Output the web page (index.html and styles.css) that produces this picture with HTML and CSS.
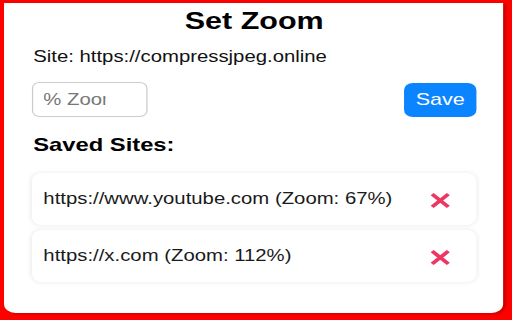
FILE: index.html
```html
<!DOCTYPE html>
<html lang="en">
<head>
<meta charset="utf-8">
<title>Set Zoom</title>
<link rel="stylesheet" href="styles.css">
</head>
<body>
  <div class="panel">
    <h2 class="title">Set Zoom</h2>
    <p class="site">Site: https://compressjpeg.online</p>
    <div class="controls">
      <input class="zoom-input" type="text" placeholder="% Zoom">
      <button class="save-btn">Save</button>
    </div>
    <h3 class="saved-title">Saved Sites:</h3>
    <ul class="site-list">
      <li class="site-row">
        <span class="site-text">https://www.youtube.com (Zoom: 67%)</span>
        <svg class="remove" viewBox="0 0 16 16" aria-label="remove"><path d="M2 2L14 14M14 2L2 14"/></svg>
      </li>
      <li class="site-row">
        <span class="site-text">https://x.com (Zoom: 112%)</span>
        <svg class="remove" viewBox="0 0 16 16" aria-label="remove"><path d="M2 2L14 14M14 2L2 14"/></svg>
      </li>
    </ul>
  </div>
</body>
</html>
```
FILE: styles.css
```css
html, body {
  margin: 0;
  height: 100%;
}
body {
  background: #ff0000;
  padding: 3px 0 0 4px;
  box-sizing: border-box;
  overflow: hidden;
  font-family: "Liberation Sans", Arial, sans-serif;
  color: #111;
}
.panel {
  width: 393px;
  height: 310px;
  box-sizing: border-box;
  background: #ffffff;
  border-radius: 0 0 9px 9px;
  box-shadow: 2px 1px 3px rgba(0, 0, 0, 0.22);
  padding: 4px 21px 0 22px;
  transform: scaleX(1.27);
  transform-origin: 0 0;
}
.title {
  margin: 0;
  font-size: 24px;
  line-height: 28px;
  font-weight: bold;
  text-align: center;
  color: #000;
}
.site {
  margin: 12px 0 0 1px;
  font-size: 16px;
  line-height: 20px;
  color: #111;
}
.controls {
  display: flex;
  justify-content: space-between;
  align-items: center;
  margin-top: 15px;
}
.zoom-input {
  width: 91px;
  height: 35px;
  box-sizing: border-box;
  border: 1px solid #cccccc;
  border-radius: 6px;
  padding: 0 32px 0 8px;
  font-family: "Liberation Sans", Arial, sans-serif;
  font-size: 16px;
  color: #111;
  background: #fff;
  outline: none;
}
.zoom-input::placeholder {
  color: #777;
}
.save-btn {
  width: 57px;
  height: 34px;
  border: none;
  border-radius: 7px;
  background: #0b84ff;
  color: #ffffff;
  font-family: "Liberation Sans", Arial, sans-serif;
  font-size: 17px;
  padding: 0;
}
.saved-title {
  margin: 17px 0 0 1px;
  font-size: 18.72px;
  line-height: 22px;
  font-weight: bold;
  color: #000;
}
.site-list {
  list-style: none;
  margin: 17px 0 0 0;
  padding: 0;
  display: flex;
  flex-direction: column;
  gap: 5px;
}
.site-row {
  height: 52px;
  display: flex;
  align-items: center;
  justify-content: space-between;
  padding: 0 20px 0 9px;
  border-radius: 8px;
  background: #ffffff;
  box-shadow: 0 0 5px rgba(0, 0, 0, 0.09);
}
.site-text {
  font-size: 16px;
  line-height: 20px;
  color: #1a1a1a;
}
.remove {
  width: 17px;
  height: 17px;
  margin-top: 2px;
  fill: none;
  stroke: #ec3764;
  stroke-width: 3.2;
}
```
